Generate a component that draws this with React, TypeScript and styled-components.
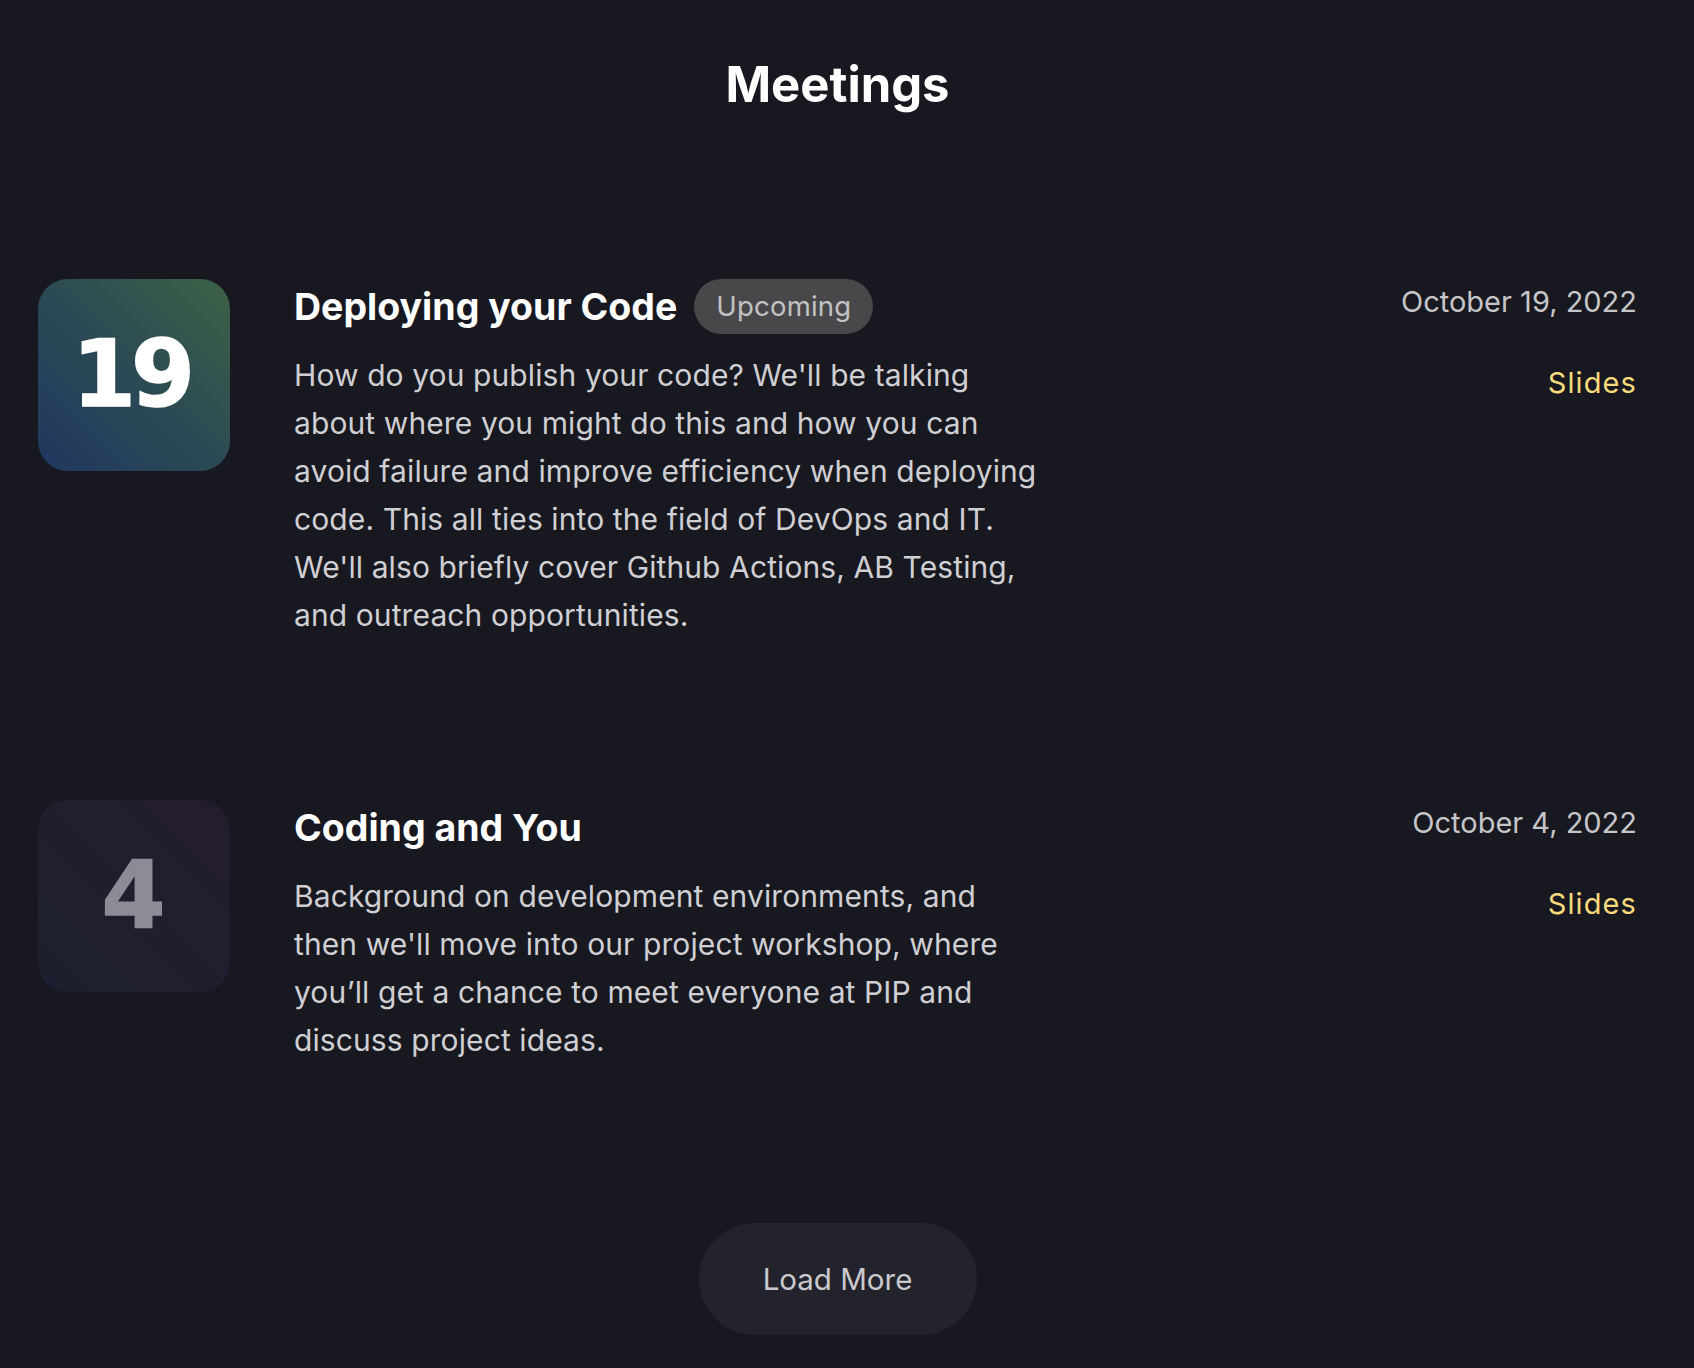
import React from "react";
import styled, { createGlobalStyle } from "styled-components";

const GlobalStyle = createGlobalStyle`
  html, body {
    margin: 0;
    padding: 0;
    background: #181820;
  }
  body {
    font-family: "Inter", "Liberation Sans", sans-serif;
    color: #c9c9ce;
    overflow: hidden;
  }
  * { box-sizing: border-box; }
`;

const Page = styled.main`
  min-height: 1368px;
  padding: 56px 57px 0 38px;
  display: flex;
  flex-direction: column;
  align-items: stretch;
`;

const PageTitle = styled.h1`
  margin: 0;
  font-family: "Inter", sans-serif;
  font-weight: 700;
  font-size: 49px;
  line-height: 58px;
  color: #ffffff;
  text-align: center;
  letter-spacing: 0;
`;

const MeetingList = styled.section`
  margin-top: 165px;
  display: flex;
  flex-direction: column;
  gap: 161px;
`;

const MeetingRow = styled.article`
  display: flex;
  align-items: flex-start;
`;

const DayBadge = styled.div<{ $accent: boolean }>`
  flex: 0 0 auto;
  width: 192px;
  height: 192px;
  border-radius: 30px;
  display: flex;
  align-items: center;
  justify-content: center;
  background: ${(p) =>
    p.$accent
      ? "linear-gradient(45deg, #203760 0%, #2c4b53 52%, #3e6246 100%)"
      : "linear-gradient(45deg, #1c1f2f 0%, #201e2e 50%, #241c2d 100%)"};
`;

const DayNumber = styled.span<{ $accent: boolean }>`
  font-family: "DejaVu Sans", sans-serif;
  font-weight: 700;
  font-size: 92px;
  line-height: 92px;
  letter-spacing: -5px;
  margin-right: 6px;
  color: ${(p) => (p.$accent ? "#ffffff" : "#8c8b96")};
  -webkit-text-stroke: 1.5px ${(p) => (p.$accent ? "#ffffff" : "#8c8b96")};
`;

const Body = styled.div`
  flex: 1 1 auto;
  margin-left: 64px;
  display: flex;
  flex-direction: column;
`;

const TitleRow = styled.div`
  min-height: 55px;
  display: flex;
  align-items: center;
  gap: 17px;
`;

const MeetingTitle = styled.h2`
  margin: 0;
  font-family: "Inter", sans-serif;
  font-weight: 700;
  font-size: 37.5px;
  line-height: 46px;
  color: #ffffff;
  letter-spacing: 0;
`;

const StatusPill = styled.span`
  height: 55px;
  padding: 0 22px;
  border-radius: 28px;
  background: #48484b;
  color: #c2c2c4;
  font-size: 27.5px;
  line-height: 55px;
  letter-spacing: 0.2px;
`;

const Description = styled.p`
  margin: 17px 0 0;
  max-width: 745px;
  font-size: 30px;
  line-height: 48px;
  color: #cfcfd4;
  letter-spacing: 0.1px;
`;

const Aside = styled.div`
  flex: 0 0 auto;
  display: flex;
  flex-direction: column;
  align-items: flex-end;
  padding-top: 3px;
`;

const DateText = styled.span`
  font-size: 29px;
  line-height: 40px;
  color: #c6c6c9;
`;

const SlidesLink = styled.a`
  margin-top: 41px;
  font-size: 29px;
  line-height: 40px;
  letter-spacing: 1.1px;
  color: #f8db7c;
  text-decoration: none;
  cursor: pointer;
`;

const Footer = styled.div`
  margin-top: 159px;
  display: flex;
  justify-content: center;
`;

const LoadMoreButton = styled.button`
  width: 278px;
  height: 112px;
  border: none;
  border-radius: 56px;
  background: #23232d;
  color: #cacacc;
  font-family: "Inter", sans-serif;
  font-size: 29.5px;
  cursor: pointer;
`;

type Meeting = {
  day: string;
  title: string;
  upcoming: boolean;
  description: string;
  date: string;
};

const meetings: Meeting[] = [
  {
    day: "19",
    title: "Deploying your Code",
    upcoming: true,
    description:
      "How do you publish your code? We'll be talking about where you might do this and how you can avoid failure and improve efficiency when deploying code. This all ties into the field of DevOps and IT. We'll also briefly cover Github Actions, AB Testing, and outreach opportunities.",
    date: "October 19, 2022",
  },
  {
    day: "4",
    title: "Coding and You",
    upcoming: false,
    description:
      "Background on development environments, and then we'll move into our project workshop, where you\u2019ll get a chance to meet everyone at PIP and discuss project ideas.",
    date: "October 4, 2022",
  },
];

export default function App() {
  return (
    <>
      <GlobalStyle />
      <Page>
        <PageTitle>Meetings</PageTitle>
        <MeetingList>
          {meetings.map((m) => (
            <MeetingRow key={m.day}>
              <DayBadge $accent={m.upcoming}>
                <DayNumber $accent={m.upcoming}>{m.day}</DayNumber>
              </DayBadge>
              <Body>
                <TitleRow>
                  <MeetingTitle>{m.title}</MeetingTitle>
                  {m.upcoming && <StatusPill>Upcoming</StatusPill>}
                </TitleRow>
                <Description>{m.description}</Description>
              </Body>
              <Aside>
                <DateText>{m.date}</DateText>
                <SlidesLink>Slides</SlidesLink>
              </Aside>
            </MeetingRow>
          ))}
        </MeetingList>
        <Footer>
          <LoadMoreButton>Load More</LoadMoreButton>
        </Footer>
      </Page>
    </>
  );
}
